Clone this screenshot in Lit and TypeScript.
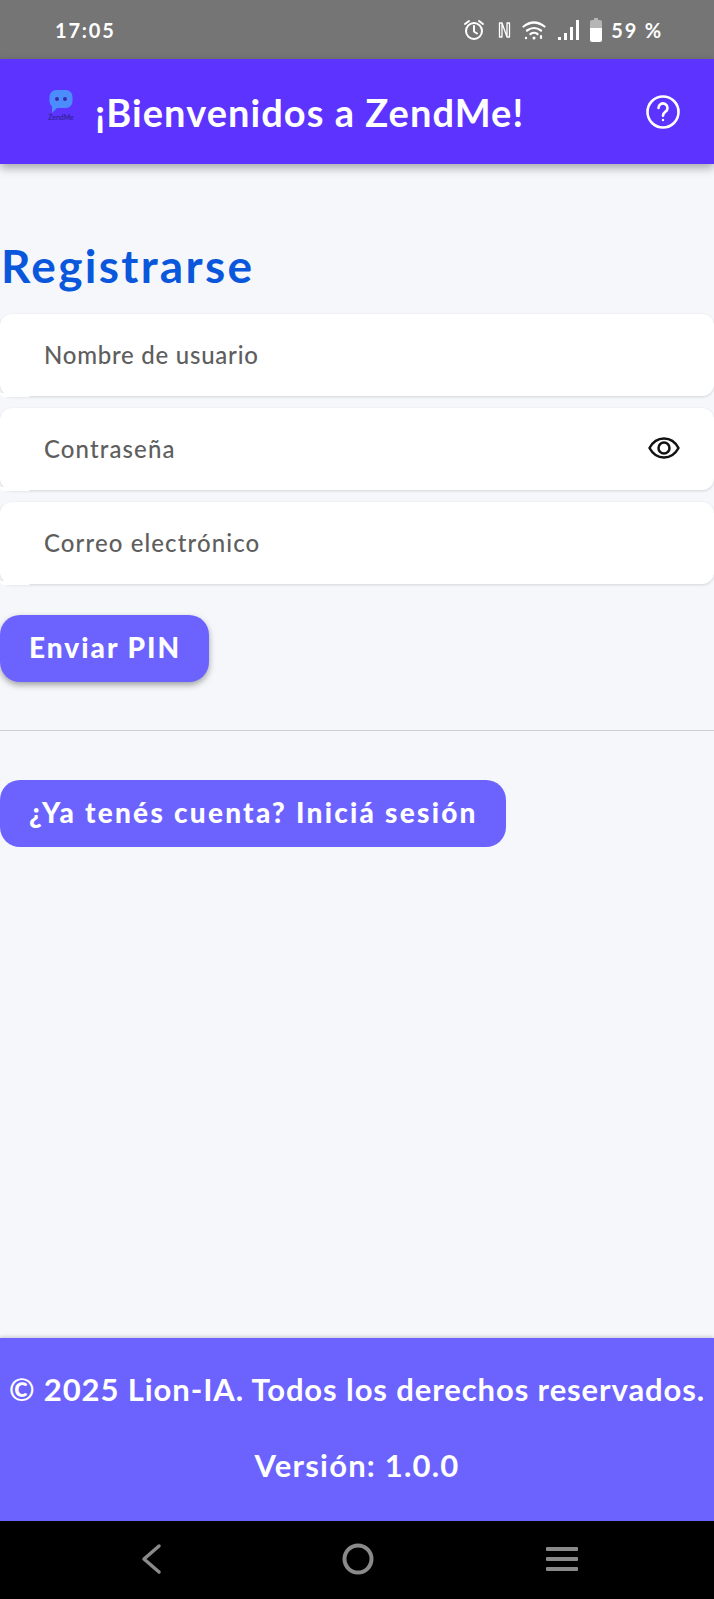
import { LitElement, html, css } from 'lit';
import { customElement } from 'lit/decorators.js';

@customElement('app-root')
export class AppRoot extends LitElement {
  static styles = css`
    :host {
      display: flex;
      flex-direction: column;
      height: 1599px;
      background: #f5f7fb;
      font-family: 'Lato', 'Noto Sans', sans-serif;
      overflow: hidden;
    }

    /* phone status bar */
    .status {
      height: 59px;
      flex: none;
      background: #757575;
      color: #fff;
      display: flex;
      align-items: center;
      padding: 0 51px 0 55px;
      font-size: 20px;
      font-weight: 700;
      letter-spacing: 1.8px;
    }
    .status .time {
      flex: 1;
    }
    .status .icons {
      display: flex;
      align-items: center;
      gap: 10px;
    }
    .status .alarm {
      margin-right: 1px;
    }
    .status .pct {
      margin-left: -1px;
    }

    /* app bar */
    .bar {
      height: 105px;
      flex: none;
      background: #5c33ff;
      box-shadow: 0 4px 9px rgba(0, 0, 0, 0.32);
      display: flex;
      align-items: center;
      padding: 0 33px 0 44px;
      position: relative;
      z-index: 1;
      color: #fff;
    }
    .logo {
      width: 34px;
      display: flex;
      flex-direction: column;
      align-items: center;
      margin-right: 17px;
      margin-top: -14px;
    }
    .logo span {
      font-size: 7px;
      line-height: 7px;
      color: #2a2080;
      margin-top: 1px;
    }
    .bar h1 {
      flex: 1;
      margin: 0;
      font-size: 38px;
      font-weight: 700;
      letter-spacing: 1.05px;
      white-space: nowrap;
    }

    main {
      flex: 1;
      display: flex;
      flex-direction: column;
      padding-top: 74px;
    }
    h2 {
      margin: 0 0 21px;
      font-size: 46px;
      line-height: 55px;
      font-weight: 700;
      color: #0a57db;
      padding-left: 1px;
      letter-spacing: 2.3px;
    }

    .field {
      height: 82px;
      box-sizing: border-box;
      background: #fff;
      border-radius: 12px;
      margin-bottom: 12px;
      box-shadow: 0 1px 3px rgba(0, 0, 0, 0.14);
      display: flex;
      align-items: center;
      justify-content: space-between;
      padding: 0 34px 2px 44px;
      color: #5e5e5e;
      font-size: 24px;
      font-weight: 500;
      letter-spacing: 1.1px;
      position: relative;
    }
    /* the white corner that hides the shadow under the first 30px */
    .field::after {
      content: '';
      position: absolute;
      left: 0;
      bottom: -1px;
      width: 30px;
      height: 4px;
      background: #fff;
      border-radius: 0 0 4px 10px;
    }
    .field.tight {
      letter-spacing: 0.75px;
    }

    .btn {
      display: block;
      border: none;
      background: #6c63ff;
      color: #fff;
      font-family: inherit;
      font-weight: 900;
      font-size: 28px;
      height: 67px;
      padding: 0 29px 4px;
      border-radius: 20px;
      text-align: left;
      white-space: nowrap;
    }
    .send {
      width: 209px;
      margin-top: 19px;
      letter-spacing: 2px;
      box-shadow: 0 3px 6px rgba(0, 0, 0, 0.35);
    }
    .login {
      width: 506px;
      letter-spacing: 2.26px;
    }
    hr {
      width: 100%;
      border: none;
      border-top: 1px solid #cfd0d4;
      margin: 48px 0 49px;
    }

    footer {
      height: 183px;
      flex: none;
      background: #6c63ff;
      box-shadow: 0 -1px 4px rgba(0, 0, 0, 0.2);
      color: #fff;
      display: flex;
      flex-direction: column;
      align-items: center;
      font-size: 31px;
      font-weight: 700;
      white-space: nowrap;
    }
    footer p {
      margin: 0;
      line-height: 40px;
    }
    footer .copy {
      margin-top: 31px;
      letter-spacing: 0.9px;
    }
    footer .ver {
      margin-top: 36px;
      letter-spacing: 1.2px;
    }

    .nav {
      height: 78px;
      box-sizing: border-box;
      flex: none;
      background: #000;
      display: flex;
      align-items: center;
      justify-content: space-between;
      padding: 0 135px 2px 139px;
    }
    .nav .home {
      margin-left: 7px;
    }
  `;

  render() {
    return html`
      <div class="status">
        <span class="time">17:05</span>
        <div class="icons">
          <svg class="alarm" width="24" height="24" viewBox="0 0 24 24" fill="none" stroke="#fff" stroke-width="2" stroke-linecap="round">
            <circle cx="12" cy="13" r="8" />
            <path d="M12 8v5.500l3 2M3 6l4-3M21 6l-4-3" />
          </svg>
          <svg width="15" height="20" viewBox="0 0 15 20" fill="none" stroke="#fff" stroke-width="1.300" stroke-linejoin="round">
            <path d="M5 3H2.500v14H5zM5 3l5 14M10 3h2.500v14H10z" />
          </svg>
          <svg width="24" height="20" viewBox="0 0 24 20" fill="none" stroke="#fff" stroke-width="2.200" stroke-linecap="round">
            <path d="M1.500 6.500Q12-1.500 22.500 6.500M5 10.500q7-5 14 0M8.500 14q3.500-2.500 7 0" />
            <circle cx="4" cy="18" r="1.200" fill="#fff" stroke="none" />
            <circle cx="12" cy="18" r="1.500" fill="#fff" stroke="none" />
            <path d="M19 16v2" />
          </svg>
          <svg width="24" height="22" viewBox="0 0 24 22" fill="#fff">
            <rect x="2" y="18" width="3" height="3" />
            <rect x="8" y="14" width="3" height="7" />
            <rect x="14" y="8" width="3" height="13" />
            <rect x="20" y="1" width="3" height="20" />
          </svg>
          <svg width="12" height="24" viewBox="0 0 12 24">
            <path d="M4 0h4v2h2a2 2 0 0 1 2 2v6H0V4a2 2 0 0 1 2-2h2z" fill="#b5b5b5" />
            <path d="M0 10h12v12a2 2 0 0 1-2 2H2a2 2 0 0 1-2-2z" fill="#fff" />
          </svg>
          <span class="pct">59 %</span>
        </div>
      </div>

      <header class="bar">
        <div class="logo">
          <svg width="24" height="24" viewBox="0 0 24 24">
            <path d="M7 1h10a6.500 6.500 0 0 1 6.500 6.500v5A6.500 6.500 0 0 1 17 19H8l-5 5v-6.500A6.500 6.500 0 0 1 .5 12.500v-5A6.500 6.500 0 0 1 7 1z" fill="#4b8dff" />
            <circle cx="8" cy="10" r="2" fill="#3a2aa8" />
            <circle cx="16" cy="10" r="2" fill="#3a2aa8" />
          </svg>
          <span>ZendMe</span>
        </div>
        <h1>¡Bienvenidos a ZendMe!</h1>
        <svg width="36" height="36" viewBox="0 0 36 36" fill="none" stroke="#fff" stroke-width="2.600" stroke-linecap="round">
          <circle cx="18" cy="18" r="15.500" />
          <path d="M13.500 14a4.500 4.500 0 1 1 7 3.700c-1.600 1.100-2.500 2-2.500 4" />
          <circle cx="18" cy="26" r="1.200" fill="#fff" stroke="none" />
        </svg>
      </header>

      <main>
        <h2>Registrarse</h2>
        <div class="field tight">Nombre de usuario</div>
        <div class="field">
          <span>Contraseña</span>
          <svg width="32" height="24" viewBox="0 0 32 24" fill="none" stroke="#111" stroke-width="2.500">
            <path d="M1.500 12C5 5.500 10 2.500 16 2.500S27 5.500 30.500 12C27 18.500 22 21.500 16 21.500S5 18.500 1.500 12z" stroke-linejoin="round" />
            <circle cx="16" cy="12" r="5.500" />
          </svg>
        </div>
        <div class="field">Correo electrónico</div>
        <button class="btn send">Enviar PIN</button>
        <hr />
        <button class="btn login">¿Ya tenés cuenta? Iniciá sesión</button>
      </main>

      <footer>
        <p class="copy">© 2025 Lion-IA. Todos los derechos reservados.</p>
        <p class="ver">Versión: 1.0.0</p>
      </footer>

      <div class="nav">
        <svg width="24" height="32" viewBox="0 0 24 32" fill="none" stroke="#8a8a8a" stroke-width="3.500" stroke-linecap="round" stroke-linejoin="round">
          <path d="M20 3L5 16l15 13" />
        </svg>
        <svg class="home" width="32" height="32" viewBox="0 0 32 32" fill="none" stroke="#8a8a8a" stroke-width="4">
          <circle cx="16" cy="16" r="13.500" />
        </svg>
        <svg width="34" height="28" viewBox="0 0 34 28" fill="#8a8a8a">
          <rect x="1" y="2" width="32" height="4" rx="1" />
          <rect x="1" y="12" width="32" height="4" rx="1" />
          <rect x="1" y="22" width="32" height="4" rx="1" />
        </svg>
      </div>
    `;
  }
}
